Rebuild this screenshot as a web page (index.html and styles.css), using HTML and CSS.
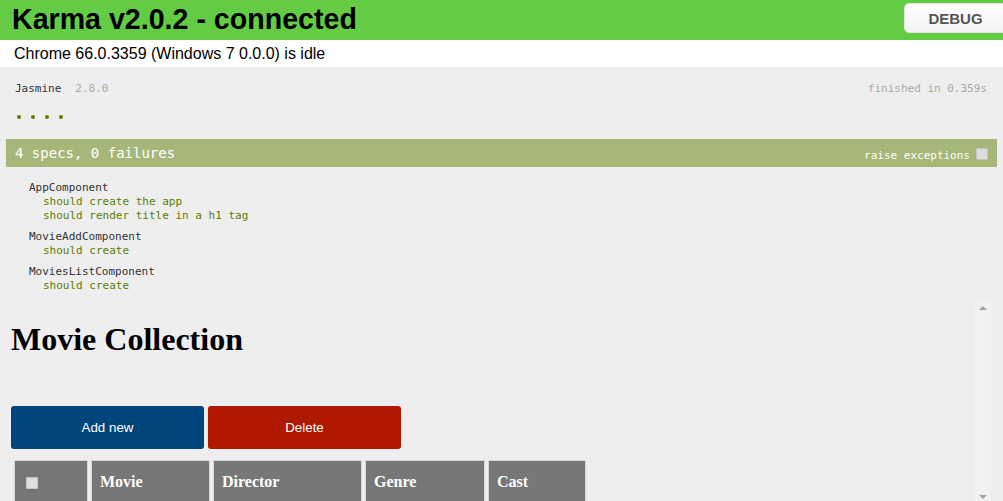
FILE: index.html
```html
<!DOCTYPE html>
<html lang="en">
<head>
<meta charset="utf-8">
<title>Karma</title>
<link rel="stylesheet" href="styles.css">
</head>
<body>
<header class="karma-bar">
  <h1 class="karma-title">Karma v2.0.2 - connected</h1>
  <button class="debug-btn">DEBUG</button>
</header>
<div class="browser-status">Chrome 66.0.3359 (Windows 7 0.0.0) is idle</div>
<main class="runner">
  <section class="jasmine">
    <div class="jasmine-banner">
      <span class="jasmine-title">Jasmine</span>
      <span class="jasmine-version">2.8.0</span>
      <span class="jasmine-duration">finished in 0.359s</span>
    </div>
    <ul class="jasmine-dots"><li></li><li></li><li></li><li></li></ul>
    <div class="jasmine-bar">
      <span class="bar-summary">4 specs, 0 failures</span>
      <span class="raise">raise exceptions<span class="bar-check"></span></span>
    </div>
    <div class="jasmine-results">
      <div class="suite">
        <div class="suite-name">AppComponent</div>
        <div class="spec">should create the app</div>
        <div class="spec">should render title in a h1 tag</div>
      </div>
      <div class="suite">
        <div class="suite-name">MovieAddComponent</div>
        <div class="spec">should create</div>
      </div>
      <div class="suite">
        <div class="suite-name">MoviesListComponent</div>
        <div class="spec">should create</div>
      </div>
    </div>
  </section>
  <section class="app-frame">
    <div class="app">
      <h1 class="app-title">Movie Collection</h1>
      <div class="actions">
        <button class="btn btn-add">Add new</button>
        <button class="btn btn-delete">Delete</button>
      </div>
      <table class="movies">
        <thead>
          <tr>
            <th class="col-check"><span class="check"></span></th>
            <th class="col-movie">Movie</th>
            <th class="col-director">Director</th>
            <th class="col-genre">Genre</th>
            <th class="col-cast">Cast</th>
          </tr>
        </thead>
      </table>
    </div>
    <div class="scrollbar"><span class="arrow arrow-up"></span><span class="arrow arrow-down"></span></div>
  </section>
</main>
</body>
</html>
```
FILE: styles.css
```css
html, body {
  margin: 0;
  padding: 0;
}
body {
  height: 501px;
  overflow: hidden;
  display: flex;
  flex-direction: column;
  background: #eeeeee;
  font-family: "Liberation Sans", Arial, sans-serif;
}

/* Karma header */
.karma-bar {
  height: 40px;
  flex: none;
  background: #64cb44;
  display: flex;
  justify-content: space-between;
  align-items: flex-start;
  overflow: hidden;
}
.karma-title {
  margin: 0;
  padding: 1px 0 0 12px;
  font-size: 28.6px;
  line-height: 36px;
  font-weight: bold;
  color: #000;
}
.debug-btn {
  margin: 3px -6px 0 0;
  width: 105px;
  height: 30px;
  border: 1px solid #e2e2e2;
  border-radius: 5px;
  background: linear-gradient(#ffffff, #f3f3f3);
  font-family: "Liberation Sans", Arial, sans-serif;
  font-size: 15px;
  font-weight: bold;
  color: #555;
  padding: 0 2px 0 0;
}
.browser-status {
  flex: none;
  height: 27px;
  line-height: 27px;
  background: #fff;
  padding-left: 14px;
  font-size: 16px;
  color: #000;
}

/* Runner area */
.runner {
  flex: 1;
  min-height: 0;
  display: flex;
  flex-direction: column;
}
.jasmine {
  margin: 0 6px;
  padding-top: 15px;
  font-family: "DejaVu Sans Mono", "Liberation Mono", monospace;
  font-size: 11px;
  line-height: 14px;
}
.jasmine-banner {
  display: flex;
  padding: 0 10px 0 9px;
}
.jasmine-title { color: #333; }
.jasmine-version { color: #aaa; margin-left: 14px; }
.jasmine-duration { color: #aaa; margin-left: auto; }

.jasmine-dots {
  list-style: none;
  margin: 0;
  padding: 19px 0 0 11px;
  display: flex;
  gap: 10px;
  height: 14px;
}
.jasmine-dots li {
  width: 4px;
  height: 4px;
  border-radius: 50%;
  background: #5e7d00;
}

.jasmine-bar {
  margin-top: 10px;
  height: 28px;
  background: #a6b779;
  color: #fff;
  display: flex;
  justify-content: space-between;
  padding: 0 9px;
}
.bar-summary {
  font-size: 14px;
  line-height: 28px;
}
.raise {
  display: flex;
  align-items: center;
  padding-top: 5px;
  font-size: 11px;
}
.bar-check {
  display: inline-block;
  width: 10px;
  height: 10px;
  margin-left: 6px;
  margin-top: -4px;
  background: #dedede;
  border: 1px solid #c4c4c4;
  border-radius: 1px;
}

.jasmine-results {
  padding: 14px 0 0 23px;
}
.suite + .suite { margin-top: 7px; }
.suite-name { color: #333; }
.spec { color: #5e7d00; padding-left: 14px; }

/* App frame */
.app-frame {
  flex: 1;
  min-height: 0;
  margin-top: 6px;
  display: flex;
  overflow: hidden;
}
.app {
  flex: 1;
  padding-left: 11px;
}
.app-title {
  margin: 22px 0 0;
  font-family: "Liberation Serif", "Times New Roman", serif;
  font-size: 32px;
  line-height: 36px;
  font-weight: bold;
  color: #000;
}
.actions {
  margin-top: 49px;
  display: flex;
  gap: 4px;
}
.btn {
  width: 193px;
  height: 43px;
  border: none;
  border-radius: 3px;
  color: #fff;
  font-family: "Liberation Sans", Arial, sans-serif;
  font-size: 13.33px;
}
.btn-add { background: #00457c; }
.btn-delete { background: #b01800; }

.movies {
  margin-top: 8px;
  border-collapse: separate;
  border-spacing: 3px;
}
.movies th {
  background: #777777;
  border: 1px solid #d6d6d6;
  color: #fff;
  text-align: left;
  font-family: "Liberation Serif", "Times New Roman", serif;
  font-size: 16px;
  line-height: 18px;
  font-weight: bold;
  padding: 12px 8px 20px 8px;
  box-sizing: border-box;
}
.movies .col-check { width: 74px; padding-left: 11px; }
.movies .col-movie { width: 119px; }
.movies .col-director { width: 149px; }
.movies .col-genre { width: 120px; }
.movies .col-cast { width: 98px; }
.check {
  display: inline-block;
  width: 10px;
  height: 10px;
  background: #dedede;
  border: 1px solid #c4c4c4;
  border-radius: 1px;
  vertical-align: -2px;
}

.scrollbar {
  width: 17px;
  margin-right: 12px;
  background: #f1f1f1;
  display: flex;
  flex-direction: column;
  justify-content: space-between;
  align-items: center;
}
.arrow {
  width: 0;
  height: 0;
  border-left: 4px solid transparent;
  border-right: 4px solid transparent;
}
.arrow-up {
  margin-top: 7px;
  border-bottom: 4px solid #a3a3a3;
}
.arrow-down {
  margin-bottom: 2px;
  border-top: 4px solid #a3a3a3;
}
```
